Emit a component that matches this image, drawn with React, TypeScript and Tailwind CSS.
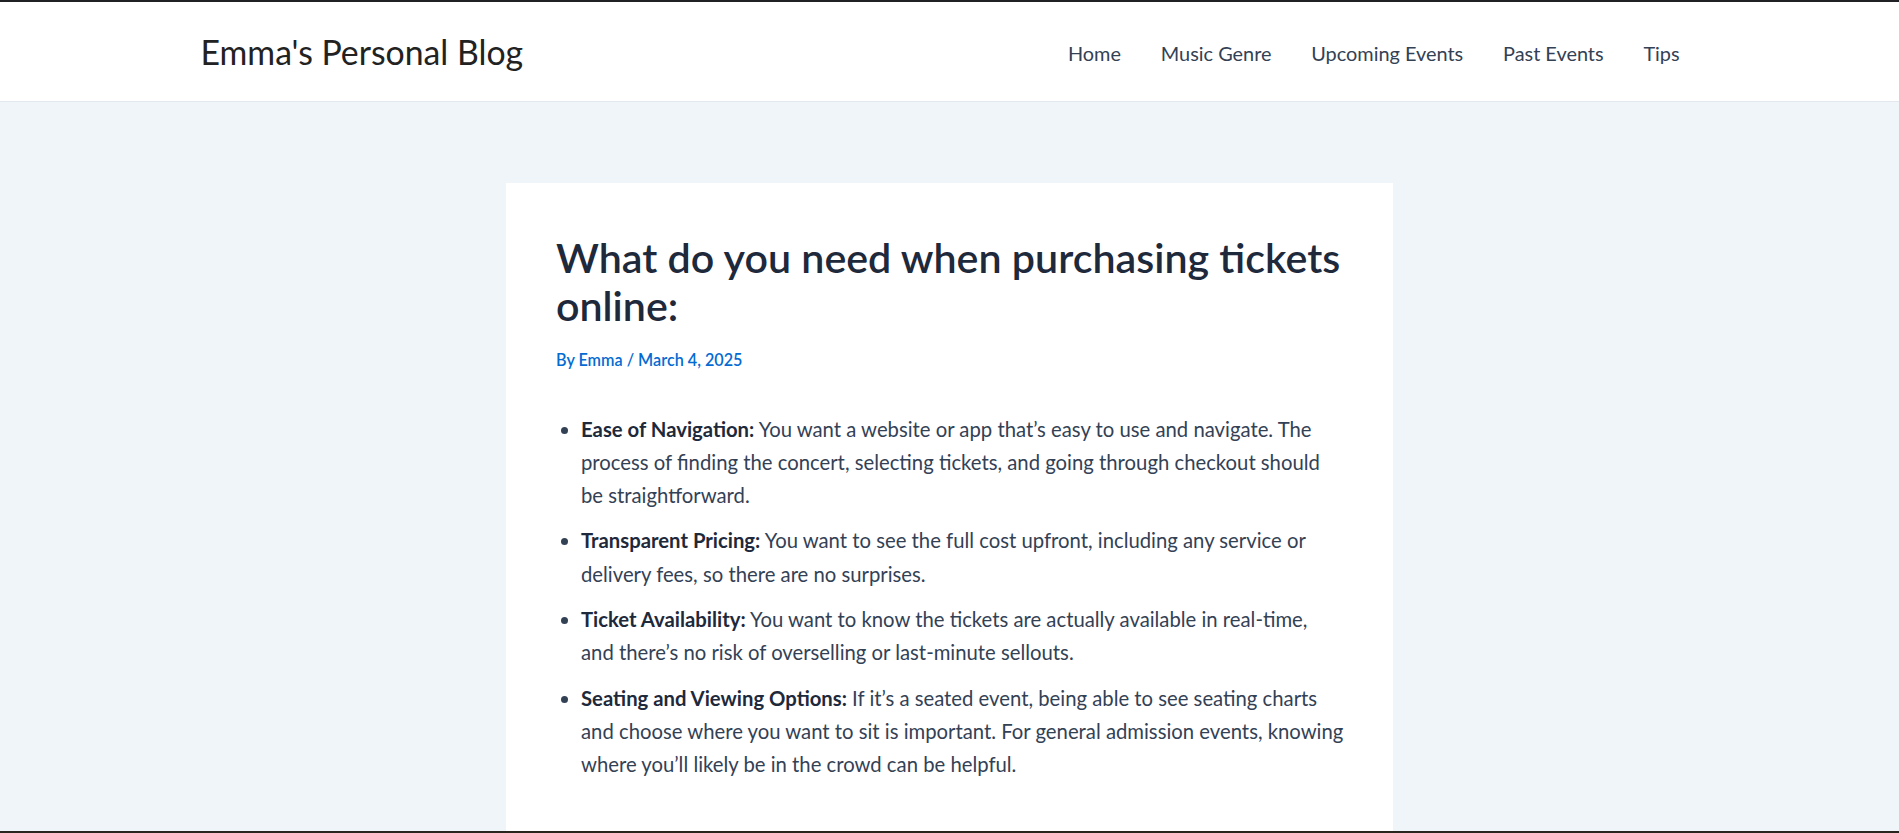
import React from "react";

const navItems = ["Home", "Music Genre", "Upcoming Events", "Past Events", "Tips"];

export default function App() {
  return (
    <div className="flex h-[833px] flex-col overflow-hidden border-t-2 border-b-2 border-t-[#1f2124] border-b-[#29251f] bg-[#f0f5fa] font-['Lato','Liberation_Sans',sans-serif]">
      <header className="flex h-[100px] shrink-0 border-b border-[#e3e8ee] bg-white">
        <div className="mx-auto flex w-[1500px] items-center justify-between">
          <div className="pl-[1px] text-[33.8px] leading-[40px] text-[#222222]">Emma's Personal Blog</div>
          <nav className="flex items-center pt-[2px]">
            {navItems.map((item) => (
              <a key={item} href="#" className="px-[19.9px] text-[19.9px] leading-[30px] text-[#334155]">
                {item}
              </a>
            ))}
          </nav>
        </div>
      </header>
      <main className="flex flex-1 justify-center pt-[81px]">
        <article className="h-[900px] w-[887px] bg-white px-[50px] pt-[51px]">
          <h1 className="whitespace-nowrap text-[41.2px] font-semibold leading-[47.5px] text-[#1e293b]">
            What do you need when purchasing tickets
            <br />
            online:
          </h1>
          <div className="mt-[19px] text-[16.2px] font-semibold leading-[24px] text-[#046bd2]">
            By Emma / March 4, 2025
          </div>
          <ul className="mt-[40.5px] list-disc whitespace-nowrap pl-[25px] text-[20.3px] leading-[33.3px] text-[#334155] marker:text-[#334155]">
            <li className="mb-[12px]">
              <strong className="font-bold text-[#1e293b]">Ease of Navigation:</strong> You want a website or app that’s easy to use and navigate. The
              <br />
              process of finding the concert, selecting tickets, and going through checkout should
              <br />
              be straightforward.
            </li>
            <li className="mb-[12px]">
              <strong className="font-bold text-[#1e293b]">Transparent Pricing:</strong> You want to see the full cost upfront, including any service or
              <br />
              delivery fees, so there are no surprises.
            </li>
            <li className="mb-[12px]">
              <strong className="font-bold text-[#1e293b]">Ticket Availability:</strong> You want to know the tickets are actually available in real-time,
              <br />
              and there’s no risk of overselling or last-minute sellouts.
            </li>
            <li className="mb-[12px]">
              <strong className="font-bold text-[#1e293b]">Seating and Viewing Options:</strong> If it’s a seated event, being able to see seating charts
              <br />
              and choose where you want to sit is important. For general admission events, knowing
              <br />
              where you’ll likely be in the crowd can be helpful.
            </li>
          </ul>
        </article>
      </main>
    </div>
  );
}
